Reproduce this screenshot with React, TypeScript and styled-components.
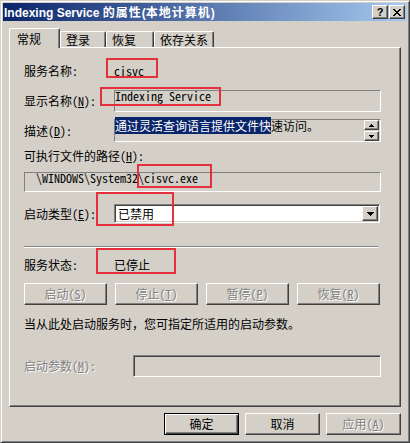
import React from "react";
import styled, { createGlobalStyle, css } from "styled-components";

const FACE = "#D4D0C8";
const SHADOW = "#808080";
const DARK = "#404040";
const HILITE = "#FFFFFF";
const GRAY_TEXT = "#808080";
const UI_FONT = `"Noto Sans Mono CJK SC", "Noto Sans CJK SC", "Liberation Mono", monospace`;

const GlobalStyle = createGlobalStyle`
  html, body { margin: 0; padding: 0; background: ${FACE}; }
  body { font-family: ${UI_FONT}; font-size: 12px; color: #000; }
`;

const Stage = styled.div`
  position: relative;
  width: 410px;
  height: 443px;
  overflow: hidden;
`;

const Window = styled.div`
  box-sizing: border-box;
  width: 410px;
  height: 443px;
  background: ${FACE};
  border: 1px solid;
  border-color: ${FACE} ${DARK} ${DARK} ${FACE};
  box-shadow: inset 1px 1px ${HILITE}, inset -1px -1px ${SHADOW};
  padding: 2px;
  display: flex;
  flex-direction: column;
`;

const TitleBar = styled.div`
  height: 18px;
  flex: none;
  display: flex;
  align-items: center;
  justify-content: space-between;
  padding: 0 2px 0 1px;
  background: linear-gradient(to right, #0a246a, #a6caf0);
`;

const TitleText = styled.div`
  color: #fff;
  font-weight: bold;
  font-size: 12px;
  line-height: 18px;
  white-space: nowrap;
`;

const TitleLatin = styled.span`
  font-family: "Liberation Sans", Arial, sans-serif;
`;

const TitleCjk = styled.span`
  font-family: "Noto Sans CJK SC", sans-serif;
  letter-spacing: 1px;
`;

const CaptionGroup = styled.div`
  display: flex;
  gap: 1px;
`;

const CaptionButton = styled.div`
  box-sizing: border-box;
  width: 16px;
  height: 14px;
  background: ${FACE};
  border: 1px solid;
  border-color: ${HILITE} ${DARK} ${DARK} ${HILITE};
  box-shadow: inset -1px -1px ${SHADOW};
  display: flex;
  align-items: center;
  justify-content: center;
  font-family: "Liberation Sans", sans-serif;
  font-weight: bold;
  font-size: 11px;
  line-height: 12px;
  color: #000;
`;

const TabStrip = styled.div`
  display: flex;
  align-items: flex-end;
  height: 19px;
  margin: 7px 6px 0 6px;
  position: relative;
  z-index: 1;
  flex: none;
`;

const Tab = styled.div<{ $active?: boolean; $w: number }>`
  box-sizing: border-box;
  width: ${(p) => p.$w}px;
  height: ${(p) => (p.$active ? 20 : 16)}px;
  margin-bottom: ${(p) => (p.$active ? -1 : 0)}px;
  background: ${FACE};
  border-top: 1px solid ${HILITE};
  border-left: 1px solid ${HILITE};
  border-right: 1px solid ${DARK};
  box-shadow: inset -1px 0 ${SHADOW};
  border-radius: 2px 2px 0 0;
  padding-left: ${(p) => (p.$active ? 7 : 5)}px;
  display: flex;
  align-items: center;
  font-size: 12px;
  line-height: 14px;
  white-space: nowrap;
`;

const Panel = styled.div`
  box-sizing: border-box;
  height: 360px;
  flex: none;
  margin: 0 6px;
  border: 1px solid;
  border-color: ${HILITE} ${DARK} ${DARK} ${HILITE};
  box-shadow: inset -1px -1px ${SHADOW};
  padding: 0 19px 0 14px;
  display: flex;
  flex-direction: column;
`;

const Row = styled.div<{ $mt: number; $h: number }>`
  display: flex;
  align-items: center;
  margin-top: ${(p) => p.$mt}px;
  height: ${(p) => p.$h}px;
  flex: none;
`;

const Label = styled.div<{ $w?: number; $disabled?: boolean }>`
  width: ${(p) => p.$w ?? 90}px;
  flex: none;
  white-space: nowrap;
  line-height: 14px;
  ${(p) =>
    p.$disabled &&
    css`
      color: ${GRAY_TEXT};
      text-shadow: 1px 1px ${HILITE};
    `}
`;

const ValueText = styled.div`
  white-space: nowrap;
  line-height: 14px;
`;

const StaticBox = styled.div<{ $pl?: number }>`
  box-sizing: border-box;
  flex: 1;
  height: 100%;
  border: 1px solid;
  border-color: ${SHADOW} ${HILITE} ${HILITE} ${SHADOW};
  display: flex;
  align-items: flex-start;
  white-space: nowrap;
  padding-left: ${(p) => p.$pl ?? 0}px;
`;

const BoxLine = styled.div`
  line-height: 14px;
  margin-top: -2px;
  flex: 1;
  white-space: nowrap;
`;

const DescLine = styled.div`
  line-height: 14px;
  margin-top: -1px;
  flex: 1;
  white-space: nowrap;
`;

const Selected = styled.span`
  background: #0a246a;
  color: #fff;
`;

const SpinColumn = styled.div`
  display: flex;
  flex-direction: column;
  gap: 1px;
  margin-right: 1px;
`;

const SmallButton = styled.div<{ $w: number; $h: number }>`
  box-sizing: border-box;
  width: ${(p) => p.$w}px;
  height: ${(p) => p.$h}px;
  background: ${FACE};
  border: 1px solid;
  border-color: ${HILITE} ${DARK} ${DARK} ${HILITE};
  box-shadow: inset -1px -1px ${SHADOW};
  display: flex;
  align-items: center;
  justify-content: center;
  flex: none;
`;

const Combo = styled.div`
  box-sizing: border-box;
  flex: none;
  width: 266px;
  height: 100%;
  background: #fff;
  border: 1px solid;
  border-color: ${SHADOW} ${HILITE} ${HILITE} ${SHADOW};
  box-shadow: inset 1px 1px ${DARK}, inset -1px -1px ${FACE};
  padding: 1px 1px 1px 3px;
  display: flex;
  align-items: center;
  justify-content: space-between;
`;

const ComboText = styled.div`
  line-height: 14px;
  white-space: nowrap;
`;

const EditBox = styled.div<{ $w: number }>`
  box-sizing: border-box;
  flex: none;
  width: ${(p) => p.$w}px;
  height: 100%;
  background: ${FACE};
  border: 1px solid;
  border-color: ${SHADOW} ${HILITE} ${HILITE} ${SHADOW};
  box-shadow: inset 1px 1px ${DARK}, inset -1px -1px ${FACE};
`;

const Separator = styled.div`
  flex: none;
  margin-top: 23px;
  margin-right: 3px;
  height: 0;
  border-top: 1px solid ${SHADOW};
  border-bottom: 1px solid ${HILITE};
`;

const ButtonRow = styled.div`
  display: flex;
  justify-content: space-between;
  margin-top: 8px;
  height: 22px;
  width: 356px;
  flex: none;
`;

const PushButton = styled.button<{ $w: number; $default?: boolean }>`
  box-sizing: border-box;
  width: ${(p) => p.$w}px;
  height: 22px;
  margin: 0;
  padding: 0;
  background: ${FACE};
  font-family: ${UI_FONT};
  font-size: 12px;
  line-height: 14px;
  color: #000;
  border: 1px solid;
  border-color: ${HILITE} ${DARK} ${DARK} ${HILITE};
  box-shadow: inset -1px -1px ${SHADOW};
  outline: none;
  white-space: nowrap;
  ${(p) =>
    p.$default &&
    css`
      border-color: #000;
      box-shadow: inset 1px 1px ${HILITE}, inset -1px -1px ${DARK},
        inset -2px -2px ${SHADOW};
    `}
  &:disabled {
    color: ${GRAY_TEXT};
    text-shadow: 1px 1px ${HILITE};
  }
`;

const InfoText = styled.div`
  margin-top: 11px;
  height: 16px;
  line-height: 16px;
  white-space: nowrap;
  flex: none;
`;

const DialogButtons = styled.div`
  display: flex;
  justify-content: flex-end;
  gap: 6px;
  margin: 6px 6px 0 6px;
  flex: none;
`;

const Annotation = styled.div<{ $x: number; $y: number; $w: number; $h: number }>`
  position: absolute;
  left: ${(p) => p.$x}px;
  top: ${(p) => p.$y}px;
  width: ${(p) => p.$w}px;
  height: ${(p) => p.$h}px;
  box-sizing: border-box;
  border: 2px solid #e2313d;
  pointer-events: none;
`;

const CloseGlyph = () => (
  <svg width="8" height="7" viewBox="0 0 8 7" shapeRendering="crispEdges">
    <path
      fill="#000"
      d="M0 0h2v1H0zM6 0h2v1H6zM1 1h2v1H1zM5 1h2v1H5zM2 2h4v1H2zM3 3h2v1H3zM2 4h4v1H2zM1 5h2v1H1zM5 5h2v1H5zM0 6h2v1H0zM6 6h2v1H6z"
    />
  </svg>
);

const DownArrow = () => (
  <svg width="7" height="4" viewBox="0 0 7 4" shapeRendering="crispEdges">
    <path fill="#000" d="M0 0h7v1H0zM1 1h5v1H1zM2 2h3v1H2zM3 3h1v1H3z" />
  </svg>
);

const TinyUp = () => (
  <svg width="5" height="3" viewBox="0 0 5 3" shapeRendering="crispEdges">
    <path fill="#000" d="M2 0h1v1H2zM1 1h3v1H1zM0 2h5v1H0z" />
  </svg>
);

const TinyDown = () => (
  <svg width="5" height="3" viewBox="0 0 5 3" shapeRendering="crispEdges">
    <path fill="#000" d="M0 0h5v1H0zM1 1h3v1H1zM2 2h1v1H2z" />
  </svg>
);

const tabs = [
  { label: "常规", w: 51, active: true },
  { label: "登录", w: 46 },
  { label: "恢复", w: 48 },
  { label: "依存关系", w: 60 },
];

const annotations = [
  { x: 106, y: 58, w: 52, h: 20 },
  { x: 100, y: 87, w: 121, h: 19 },
  { x: 137, y: 164, w: 75, h: 24 },
  { x: 96, y: 192, w: 78, h: 34 },
  { x: 96, y: 248, w: 80, h: 26 },
];

export default function App() {
  return (
    <Stage>
      <GlobalStyle />
      <Window>
        <TitleBar>
          <TitleText>
            <TitleLatin>Indexing Service </TitleLatin>
            <TitleCjk>的属性</TitleCjk>
            <TitleLatin>(</TitleLatin>
            <TitleCjk>本地计算机</TitleCjk>
            <TitleLatin>)</TitleLatin>
          </TitleText>
          <CaptionGroup>
            <CaptionButton>?</CaptionButton>
            <CaptionButton>
              <CloseGlyph />
            </CaptionButton>
          </CaptionGroup>
        </TitleBar>

        <TabStrip>
          {tabs.map((t) => (
            <Tab key={t.label} $w={t.w} $active={t.active}>
              {t.label}
            </Tab>
          ))}
        </TabStrip>

        <Panel>
          <Row $mt={13} $h={20}>
            <Label>服务名称:</Label>
            <ValueText>cisvc</ValueText>
          </Row>
          <Row $mt={9} $h={22}>
            <Label>
              显示名称(<u>N</u>):
            </Label>
            <StaticBox>
              <BoxLine>Indexing Service</BoxLine>
            </StaticBox>
          </Row>
          <Row $mt={7} $h={23}>
            <Label>
              描述(<u>D</u>):
            </Label>
            <StaticBox>
              <DescLine>
                <Selected>通过灵活查询语言提供文件快</Selected>速访问。
              </DescLine>
              <SpinColumn>
                <SmallButton $w={15} $h={10}>
                  <TinyUp />
                </SmallButton>
                <SmallButton $w={15} $h={10}>
                  <TinyDown />
                </SmallButton>
              </SpinColumn>
            </StaticBox>
          </Row>
          <Row $mt={6} $h={16}>
            <Label $w={200}>
              可执行文件的路径(<u>H</u>):
            </Label>
          </Row>
          <Row $mt={8} $h={20}>
            <StaticBox $pl={11}>
              <BoxLine>\WINDOWS\System32\cisvc.exe</BoxLine>
            </StaticBox>
          </Row>
          <Row $mt={12} $h={19}>
            <Label>
              启动类型(<u>E</u>):
            </Label>
            <Combo>
              <ComboText>已禁用</ComboText>
              <SmallButton $w={16} $h={15}>
                <DownArrow />
              </SmallButton>
            </Combo>
          </Row>
          <Separator />
          <Row $mt={7} $h={20}>
            <Label>服务状态:</Label>
            <ValueText>已停止</ValueText>
          </Row>
          <ButtonRow>
            <PushButton $w={83} disabled>
              启动(<u>S</u>)
            </PushButton>
            <PushButton $w={83} disabled>
              停止(<u>T</u>)
            </PushButton>
            <PushButton $w={83} disabled>
              暂停(<u>P</u>)
            </PushButton>
            <PushButton $w={83} disabled>
              恢复(<u>R</u>)
            </PushButton>
          </ButtonRow>
          <InfoText>当从此处启动服务时，您可指定所适用的启动参数。</InfoText>
          <Row $mt={23} $h={22}>
            <Label $w={109} $disabled>
              启动参数(<u>M</u>):
            </Label>
            <EditBox $w={248} />
          </Row>
        </Panel>

        <DialogButtons>
          <PushButton $w={75} $default>
            确定
          </PushButton>
          <PushButton $w={75}>取消</PushButton>
          <PushButton $w={75} disabled>
            应用(<u>A</u>)
          </PushButton>
        </DialogButtons>
      </Window>
      {annotations.map((a, i) => (
        <Annotation key={i} $x={a.x} $y={a.y} $w={a.w} $h={a.h} />
      ))}
    </Stage>
  );
}
